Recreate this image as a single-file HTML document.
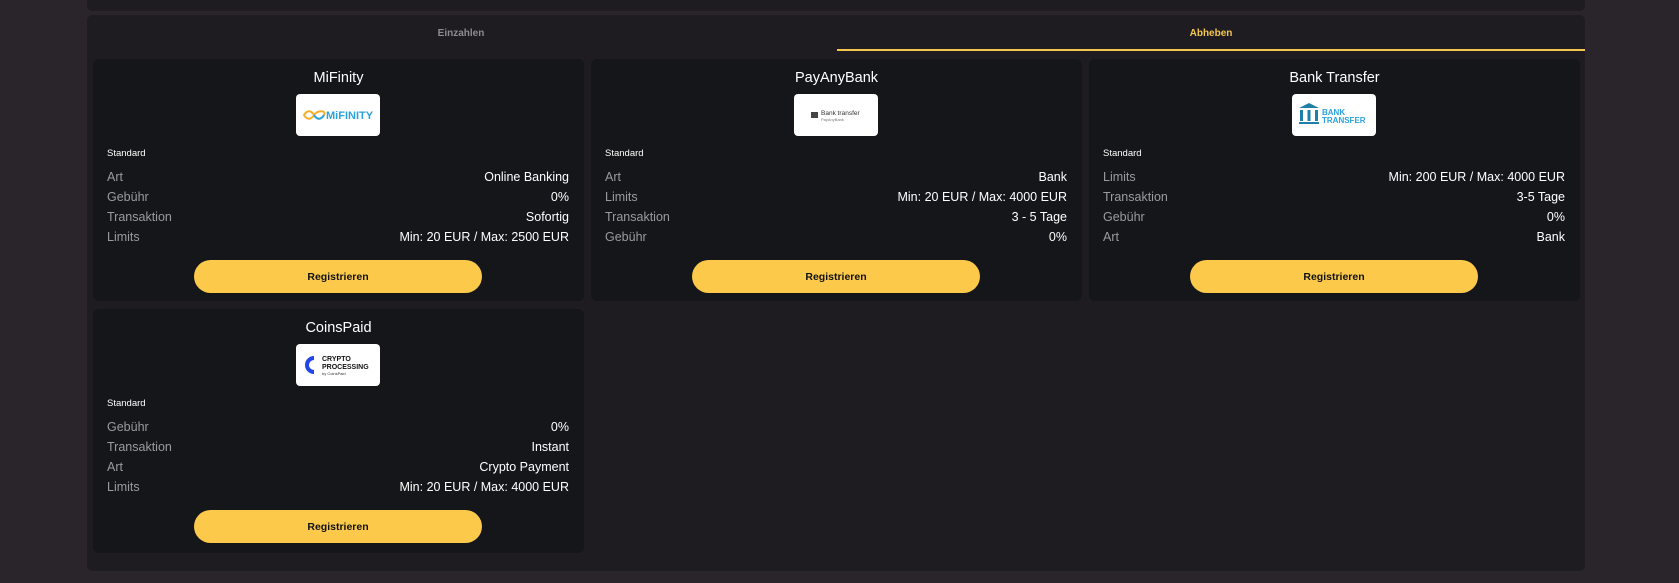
<!DOCTYPE html>
<html><head><meta charset="utf-8"><style>
*{margin:0;padding:0;box-sizing:border-box}
body{width:1679px;height:583px;background:#29252a;font-family:"Liberation Sans",sans-serif;position:relative;overflow:hidden;color:#fff}
.top{position:absolute;left:87px;top:-10px;width:1498px;height:21px;background:#1e1c21;border-radius:6px}
.main{position:absolute;left:87px;top:15px;width:1498px;height:556px;background:#1e1c21;border-radius:6px}
.tab{position:absolute;top:28px;font-size:10px;font-weight:bold;text-align:center;width:748px}
.line{position:absolute;left:837px;top:49px;width:748px;height:2px;background:#f5c64c}
.card{position:absolute;width:491px;background:#15161a;border-radius:6px}
.title{position:absolute;top:11px;width:100%;text-align:center;font-size:14.5px}
.logo{position:absolute;left:203px;top:35px;width:84px;height:42px;background:#fff;border-radius:4px;overflow:hidden}
.std{position:absolute;left:14px;top:89px;font-size:9.5px}
.rows{position:absolute;left:14px;right:15px;top:108px}
.row{display:flex;justify-content:space-between;height:20px;line-height:20px;font-size:12.5px}
.row span:first-child{color:#9a9aa0}
.btn{position:absolute;left:101px;top:201px;width:288px;height:33px;border-radius:17px;background:#fcc94b;color:#111;font-size:10.5px;font-weight:bold;text-align:center;line-height:34px}
</style></head><body>
<div class="top"></div>
<div class="main"></div>
<div class="tab" style="left:87px;color:#8e8c92">Einzahlen</div>
<div class="tab" style="left:837px;color:#f5c64c">Abheben</div>
<div class="line"></div>

<div class="card" style="left:93px;top:59px;height:242px">
<div class="title">MiFinity</div>
<div class="logo"><svg width="84" height="42"><path d="M8 21c3-5 7-5 10 0s7 5 10 0-7-5-10 0-7 5-10 0z" fill="none" stroke="#f3b02a" stroke-width="2"/><path d="M18 21c3 5 7 5 10 0" fill="none" stroke="#2aa3dc" stroke-width="2"/><text x="30" y="25" font-size="11" font-weight="bold" fill="#2aa3dc" font-family="Liberation Sans">MiFINITY</text></svg></div>
<div class="std">Standard</div>
<div class="rows">
<div class="row"><span>Art</span><span>Online Banking</span></div>
<div class="row"><span>Gebühr</span><span>0%</span></div>
<div class="row"><span>Transaktion</span><span>Sofortig</span></div>
<div class="row"><span>Limits</span><span>Min: 20 EUR / Max: 2500 EUR</span></div>
</div>
<div class="btn">Registrieren</div>
</div>

<div class="card" style="left:591px;top:59px;height:242px">
<div class="title">PayAnyBank</div>
<div class="logo"><svg width="84" height="42"><rect x="17" y="18" width="7" height="6" fill="#444"/><text x="27" y="21" font-size="6.5" fill="#333" font-family="Liberation Sans">Bank transfer</text><text x="27" y="27" font-size="4" fill="#777" font-family="Liberation Sans">PayAnyBank</text></svg></div>
<div class="std">Standard</div>
<div class="rows">
<div class="row"><span>Art</span><span>Bank</span></div>
<div class="row"><span>Limits</span><span>Min: 20 EUR / Max: 4000 EUR</span></div>
<div class="row"><span>Transaktion</span><span>3 - 5 Tage</span></div>
<div class="row"><span>Gebühr</span><span>0%</span></div>
</div>
<div class="btn">Registrieren</div>
</div>

<div class="card" style="left:1089px;top:59px;height:242px">
<div class="title">Bank Transfer</div>
<div class="logo"><svg width="84" height="42"><path d="M7 14l10-5 10 5z" fill="#1f7fa6"/><rect x="8" y="16" width="3" height="11" fill="#1f7fa6"/><rect x="15.5" y="16" width="3" height="11" fill="#1f7fa6"/><rect x="23" y="16" width="3" height="11" fill="#1f7fa6"/><rect x="7" y="28" width="20" height="2" fill="#1f7fa6"/><text x="30" y="21" font-size="8" font-weight="bold" fill="#2aa3dc" font-family="Liberation Sans">BANK</text><text x="30" y="29" font-size="8" font-weight="bold" fill="#2aa3dc" font-family="Liberation Sans">TRANSFER</text></svg></div>
<div class="std">Standard</div>
<div class="rows">
<div class="row"><span>Limits</span><span>Min: 200 EUR / Max: 4000 EUR</span></div>
<div class="row"><span>Transaktion</span><span>3-5 Tage</span></div>
<div class="row"><span>Gebühr</span><span>0%</span></div>
<div class="row"><span>Art</span><span>Bank</span></div>
</div>
<div class="btn">Registrieren</div>
</div>

<div class="card" style="left:93px;top:309px;height:244px">
<div class="title">CoinsPaid</div>
<div class="logo"><svg width="84" height="42"><path d="M18 12a9 9 0 1 0 0 18v-4a5 5 0 1 1 0-10z" fill="#2347e6"/><text x="26" y="17" font-size="7" font-weight="bold" fill="#111" font-family="Liberation Sans">CRYPTO</text><text x="26" y="25" font-size="7" font-weight="bold" fill="#111" font-family="Liberation Sans">PROCESSING</text><text x="26" y="31" font-size="4" fill="#333" font-family="Liberation Sans">by CoinsPaid</text></svg></div>
<div class="std">Standard</div>
<div class="rows">
<div class="row"><span>Gebühr</span><span>0%</span></div>
<div class="row"><span>Transaktion</span><span>Instant</span></div>
<div class="row"><span>Art</span><span>Crypto Payment</span></div>
<div class="row"><span>Limits</span><span>Min: 20 EUR / Max: 4000 EUR</span></div>
</div>
<div class="btn">Registrieren</div>
</div>
</body></html>
